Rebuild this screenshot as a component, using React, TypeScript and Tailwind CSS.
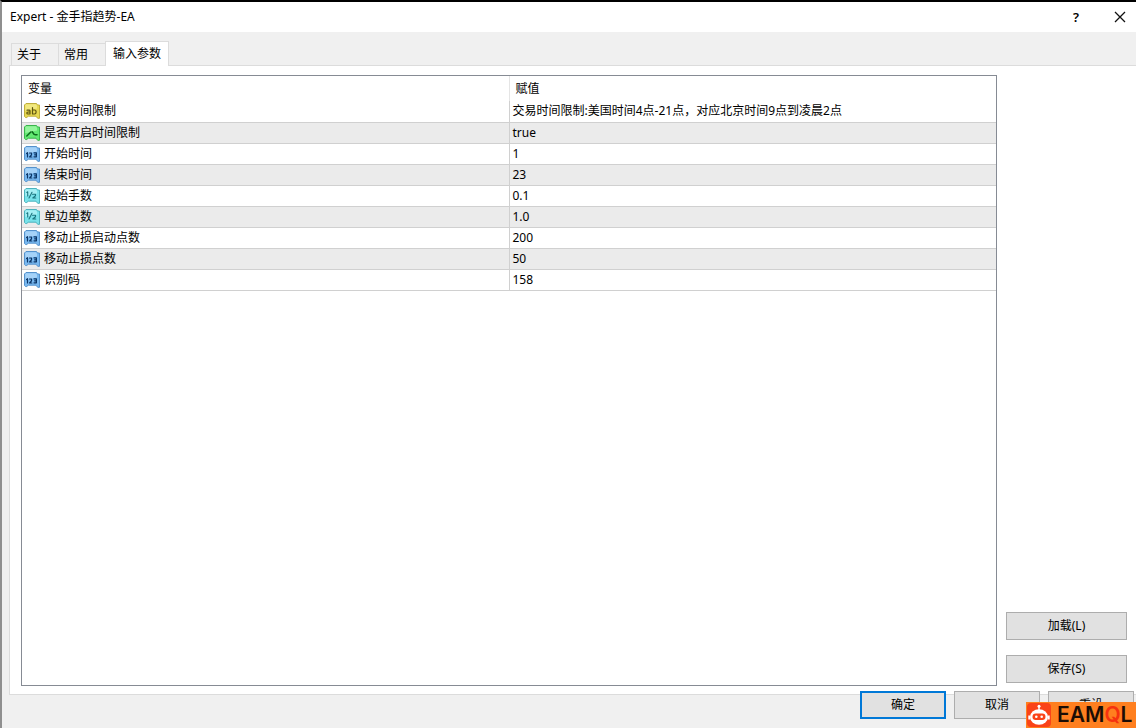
import { useState } from 'react'
import { clsx } from 'clsx'

type ParamType = 'string' | 'bool' | 'int' | 'double'

interface Param {
  name: string
  type: ParamType
  value: string
}

const TABS = ['关于', '常用', '输入参数']

const PARAMS: Param[] = [
  { name: '交易时间限制', type: 'string', value: '交易时间限制:美国时间4点-21点，对应北京时间9点到凌晨2点' },
  { name: '是否开启时间限制', type: 'bool', value: 'true' },
  { name: '开始时间', type: 'int', value: '1' },
  { name: '结束时间', type: 'int', value: '23' },
  { name: '起始手数', type: 'double', value: '0.1' },
  { name: '单边单数', type: 'double', value: '1.0' },
  { name: '移动止损启动点数', type: 'int', value: '200' },
  { name: '移动止损点数', type: 'int', value: '50' },
  { name: '识别码', type: 'int', value: '158' },
]

const ICON_COLORS: Record<ParamType, { fill: string; light: string; edge: string; ink: string }> = {
  string: { fill: '#e6d850', light: '#f4ec8c', edge: '#bfae3c', ink: '#5f5510' },
  bool: { fill: '#62e872', light: '#a2f8a8', edge: '#3bb44e', ink: '#0c6a1c' },
  int: { fill: '#78b8f0', light: '#b0d8fa', edge: '#5592cc', ink: '#0b3566' },
  double: { fill: '#78e2ea', light: '#b0f2f6', edge: '#4bb2bd', ink: '#1b7680' },
}

function TypeIcon({ type }: { type: ParamType }) {
  const c = ICON_COLORS[type]
  return (
    <svg viewBox="0 0 16 16" className="h-4 w-4 shrink-0" aria-hidden="true">
      <path
        d="M2 .5h10.5L13.5 2H15.500v13.3h-1.8L12 13.200H4.200L2.800 14.500H1.500L.5 13.500V2z"
        fill={c.fill}
        stroke={c.edge}
        strokeLinejoin="round"
      />
      <path d="M2.200 1.300h9.800l1 1.500V5.500L1.300 8V2.300z" fill={c.light} opacity="0.8" />
      <g fill="none" stroke={c.ink} strokeWidth="1.2" strokeLinecap="round" strokeLinejoin="round">
        {type === 'string' && (
          <path d="M3 7.2h2.2q.8 0 .8.8v3H4Q2.800 11 2.800 10T4 9h2M8.500 4.500V11h2q1.600 0 1.600-2t-1.600-2h-2" />
        )}
        {type === 'bool' && <path d="M2.800 11l4-4M8.200 6.800l1.800 2.400M11 9.700h2" strokeWidth="1.5" />}
        {type === 'int' && (
          <path d="M2.500 7.500l1-.8V11M5.500 7h2v1.800L5.600 11h2.200M10 6.800h2.400v4H10M10.600 8.800h1.800" />
        )}
        {type === 'double' && (
          <path d="M2.800 4.500l.9-.7V8M8 4.200L5 10M8.500 6.200h3v1.600L8.800 10h3" strokeWidth="1.100" />
        )}
      </g>
    </svg>
  )
}

function DialogButton({ label, primary, className }: { label: string; primary?: boolean; className?: string }) {
  return (
    <button
      type="button"
      className={clsx(
        'h-7 bg-[#e1e1e1] text-center text-black',
        primary ? 'border-2 border-[#0078d7]' : 'border border-[#adadad]',
        className,
      )}
    >
      {label}
    </button>
  )
}

function Watermark() {
  return (
    <div className="absolute right-0 bottom-0 flex h-[26px] w-[110px] items-center gap-1 bg-[#ff7f1f] pl-px">
      <svg viewBox="0 0 24 24" className="h-6 w-6 shrink-0" aria-hidden="true">
        <rect width="24" height="24" rx="4" fill="#fa4318" />
        <circle cx="12" cy="3.200" r="1.500" fill="#fff" />
        <path d="M11.300 4h1.400v3h-1.400zM1.300 12.500h2v4h-2zM20.700 12.500h2v4h-2z" fill="#fff" />
        <ellipse cx="12" cy="14" rx="9" ry="7.800" fill="#fff" />
        <rect x="5.500" y="10.600" width="13" height="6.400" rx="3.200" fill="#fa4318" />
        <circle cx="9.300" cy="13.800" r="1.300" fill="#fff" />
        <circle cx="14.700" cy="13.800" r="1.300" fill="#fff" />
      </svg>
      <span className="pl-0.5 font-[Inter,sans-serif] text-[21px] leading-6 font-semibold text-[#1c0d05]">
        EAM<span className="text-[#f5320f]">Q</span>L
      </span>
    </div>
  )
}

export default function App() {
  const [tab, setTab] = useState(2)

  return (
    <div className="relative flex min-h-screen flex-col border-t-2 border-l-2 border-t-black border-l-[#8f8f8f] bg-[#f0f0f0] font-['Noto_Sans','Noto_Sans_CJK_SC',sans-serif] text-[12px] leading-4 text-black">
      <header className="flex h-[30px] items-center justify-between bg-white px-2">
        <h1>Expert - 金手指趋势-EA</h1>
        <div className="flex items-center gap-7">
          <button type="button" aria-label="帮助" className="w-4 text-center text-[13px] font-semibold">
            ?
          </button>
          <button type="button" aria-label="关闭" className="flex w-4 justify-center">
            <svg viewBox="0 0 12 12" className="h-3 w-3" fill="none" stroke="#111" strokeWidth="1.3">
              <path d="M1 1l10 10M11 1L1 11" />
            </svg>
          </button>
        </div>
      </header>

      <div role="tablist" className="relative z-10 -mb-px flex items-end pt-[9px] pl-[9px]">
        {TABS.map((label, i) => (
          <button
            key={label}
            type="button"
            role="tab"
            aria-selected={tab === i}
            onClick={() => setTab(i)}
            className={clsx(
              'border-[#dcdcdc]',
              tab === i
                ? 'h-[25px] border border-b-0 bg-white px-[7px] pb-px'
                : 'h-[23px] w-[47px] border-t border-l border-b bg-[#f0f0f0] pr-3',
            )}
          >
            {label}
          </button>
        ))}
      </div>

      <main className="ml-[7px] flex flex-1 border border-r-0 border-[#dcdcdc] bg-white pt-[9px] pr-[9px] pb-2 pl-[11px]">
        <div className="flex-1 border border-[#868b94]">
          <table className="w-full table-fixed border-collapse text-left">
            <thead>
              <tr className="h-[25px]">
                <th className="border-r border-[#e5e5e5] pl-1.5 font-normal">变量</th>
                <th className="pl-1.5 font-normal">赋值</th>
              </tr>
            </thead>
            <tbody>
              {PARAMS.map((p) => (
                <tr key={p.name} className="h-[21px] border-b border-[#d0d0d0] even:bg-[#ebebeb]">
                  <td className="border-r border-[#d0d0d0] p-0">
                    <div className="flex items-center gap-1 pl-0.5">
                      <TypeIcon type={p.type} />
                      {p.name}
                    </div>
                  </td>
                  <td className="py-0 pr-0 pl-[3px] whitespace-nowrap">{p.value}</td>
                </tr>
              ))}
            </tbody>
          </table>
        </div>
        <div className="ml-[9px] flex w-[121px] flex-col justify-end gap-[15px] pb-[3px]">
          <DialogButton label="加载(L)" />
          <DialogButton label="保存(S)" />
        </div>
      </main>

      <footer className="relative -mt-1 flex justify-end gap-2 pr-0.5 pb-[9px]">
        <DialogButton label="确定" primary className="w-[86px]" />
        <DialogButton label="取消" className="w-[86px]" />
        <DialogButton label="重设" className="w-[86px]" />
      </footer>

      <Watermark />
    </div>
  )
}
